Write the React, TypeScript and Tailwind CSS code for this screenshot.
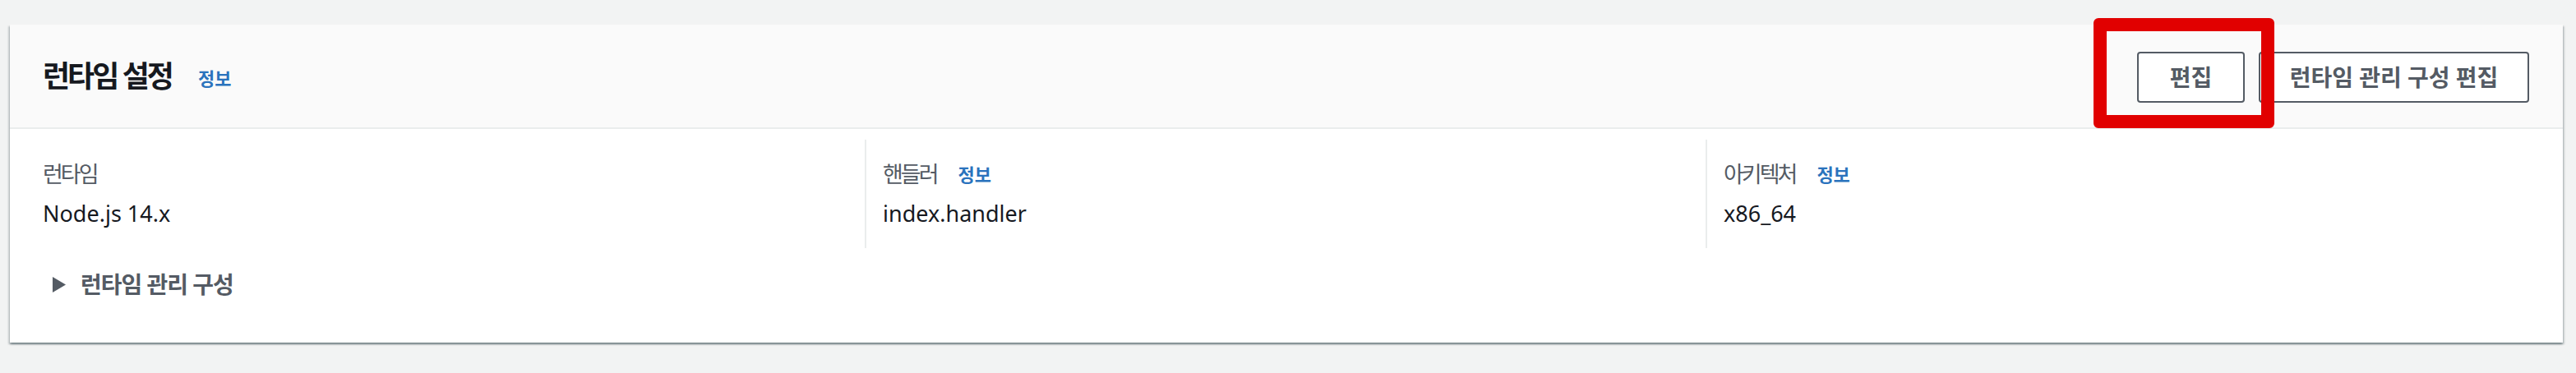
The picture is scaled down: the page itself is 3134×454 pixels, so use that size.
import React from 'react';

const latin = "font-['Noto_Sans','Noto_Sans_CJK_KR',sans-serif]";

const InfoLink: React.FC<{ className?: string }> = ({ className = '' }) => (
  <a className={`text-[22px] font-bold text-[#2a73bd] leading-none ${className}`}>정보</a>
);

interface ColumnProps {
  label: string;
  value: string;
  info?: boolean;
  first?: boolean;
}

const Column: React.FC<ColumnProps> = ({ label, value, info, first }) => (
  <div className={`pt-[22px] pb-[22px] ${first ? '' : 'border-l-2 border-[#eaeded] pl-[20px]'}`}>
    <div className="flex items-center h-[40px]">
      <span className="text-[27px] tracking-[-3px] text-[#545b64]">{label}</span>
      {info && <InfoLink className="ml-[26px]" />}
    </div>
    <div className="mt-[8px] text-[27px] leading-[40px] text-[#16191f]">{value}</div>
  </div>
);

const App: React.FC = () => {
  return (
    <div className={`w-[3134px] h-[454px] bg-[#f2f3f3] pt-[30px] pl-[12px] pr-[16px] ${latin}`}>
      <div className="bg-white h-[387px] shadow-[0_2px_2px_0_rgba(0,28,36,0.35),2px_2px_2px_0_rgba(0,28,36,0.15),-2px_2px_2px_0_rgba(0,28,36,0.15)]">
        {/* header */}
        <div className="h-[127px] bg-[#fafafa] border-b-2 border-[#eaeded] pl-[40px] pr-[41px] flex items-center justify-between">
          <div className="flex items-center">
            <h2 className="text-[36px] tracking-[-3px] font-bold text-[#16191f] leading-none">런타임 설정</h2>
            <InfoLink className="ml-[32px] mt-[4px]" />
          </div>
          <div className="flex items-center gap-[17px] mt-[2px]">
            <div className="relative">
              <button className="h-[62px] w-[131px] rounded-[4px] border-2 border-[#545b64] bg-white text-[28px] font-bold text-[#545b64]">
                편집
              </button>
              <div className="absolute left-[-53px] top-[-41px] w-[220px] h-[134px] border-[16px] border-[#e10000] rounded-[6px] z-10 pointer-events-none" />
            </div>
            <button className="h-[62px] w-[329px] rounded-[4px] border-2 border-[#545b64] bg-white text-[28px] font-bold text-[#545b64]">
              런타임 관리 구성 편집
            </button>
          </div>
        </div>

        {/* body */}
        <div className="pt-[13px] px-[40px]">
          <div className="grid grid-cols-[1000px_1023px_1fr]">
            <Column first label="런타임" value="Node.js 14.x" />
            <Column label="핸들러" value="index.handler" info />
            <Column label="아키텍처" value="x86_64" info />
          </div>

          <div className="mt-[24px] flex items-center h-[40px] pl-[12px]">
            <svg width="16" height="19" viewBox="0 0 16 19" className="shrink-0">
              <polygon points="0,0 16,9.5 0,19" fill="#545b64" />
            </svg>
            <span className="ml-[18px] text-[28px] tracking-[-1px] font-bold text-[#545b64]">런타임 관리 구성</span>
          </div>
        </div>
      </div>
    </div>
  );
};

export default App;
